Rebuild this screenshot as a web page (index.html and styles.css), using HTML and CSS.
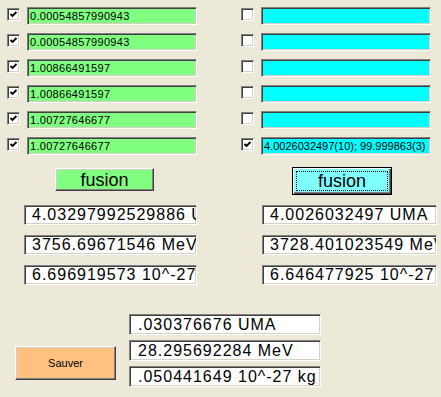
FILE: index.html
```html
<!DOCTYPE html>
<html>
<head>
<meta charset="utf-8">
<link rel="stylesheet" href="styles.css">
</head>
<body>
<div class="page">
  <div class="inputs">
    <div class="row">
      <span class="cb checked"><svg viewBox="0 0 9 9"><path d="M1.5 4 L3.5 6 L7.5 2"/></svg></span>
      <div class="field green">0.00054857990943</div>
      <span class="cb"></span>
      <div class="field cyan"></div>
    </div>
    <div class="row">
      <span class="cb checked"><svg viewBox="0 0 9 9"><path d="M1.5 4 L3.5 6 L7.5 2"/></svg></span>
      <div class="field green">0.00054857990943</div>
      <span class="cb"></span>
      <div class="field cyan"></div>
    </div>
    <div class="row">
      <span class="cb checked"><svg viewBox="0 0 9 9"><path d="M1.5 4 L3.5 6 L7.5 2"/></svg></span>
      <div class="field green">1.00866491597</div>
      <span class="cb"></span>
      <div class="field cyan"></div>
    </div>
    <div class="row">
      <span class="cb checked"><svg viewBox="0 0 9 9"><path d="M1.5 4 L3.5 6 L7.5 2"/></svg></span>
      <div class="field green">1.00866491597</div>
      <span class="cb"></span>
      <div class="field cyan"></div>
    </div>
    <div class="row">
      <span class="cb checked"><svg viewBox="0 0 9 9"><path d="M1.5 4 L3.5 6 L7.5 2"/></svg></span>
      <div class="field green">1.00727646677</div>
      <span class="cb"></span>
      <div class="field cyan"></div>
    </div>
    <div class="row">
      <span class="cb checked"><svg viewBox="0 0 9 9"><path d="M1.5 4 L3.5 6 L7.5 2"/></svg></span>
      <div class="field green">1.00727646677</div>
      <span class="cb checked"><svg viewBox="0 0 9 9"><path d="M1.5 4 L3.5 6 L7.5 2"/></svg></span>
      <div class="field cyan">4.0026032497(10); 99.999863(3)</div>
    </div>
  </div>

  <div class="results">
    <div class="col col-left">
      <button class="btn btn-green">fusion</button>
      <div class="out">4.03297992529886 UMA</div>
      <div class="out">3756.69671546 MeV</div>
      <div class="out">6.696919573 10^-27 kg</div>
    </div>
    <div class="col col-right">
      <button class="btn btn-cyan focused"><span class="focus">fusion</span></button>
      <div class="out wide">4.0026032497 UMA</div>
      <div class="out wide">3728.401023549 MeV</div>
      <div class="out wide">6.646477925 10^-27 kg</div>
    </div>
  </div>

  <div class="bottom">
    <button class="btn btn-orange">Sauver</button>
    <div class="diff">
      <div class="out big">.030376676 UMA</div>
      <div class="out big">28.295692284 MeV</div>
      <div class="out big">.050441649 10^-27 kg</div>
    </div>
  </div>
</div>
</body>
</html>
```

FILE: styles.css
```css
html, body {
  margin: 0;
  padding: 0;
  background: #ece9d8;
  width: 441px;
  height: 397px;
  overflow: hidden;
}

.page {
  font-family: "Liberation Sans", Arial, sans-serif;
  color: #000;
}

.inputs {
  padding: 7px 0 0 7px;
  display: flex;
  flex-direction: column;
  gap: 8px;
}

.row {
  display: flex;
  align-items: flex-start;
  height: 18px;
}

.cb {
  box-sizing: border-box;
  width: 13px;
  height: 13px;
  margin-top: 1px;
  background: #fff;
  border-style: solid;
  border-width: 1px;
  border-color: #808080 #fff #fff #808080;
  box-shadow: inset 1px 1px 0 #404040, inset -1px -1px 0 #d4d0c8;
  display: flex;
  align-items: center;
  justify-content: center;
}

.cb svg {
  width: 9px;
  height: 9px;
}

.cb svg path {
  fill: none;
  stroke: #000;
  stroke-width: 1.8;
}

.row .cb:first-child {
  margin-right: 7px;
}

.row .cb:nth-child(3) {
  margin-left: 44px;
  margin-right: 7px;
}

.field {
  box-sizing: border-box;
  width: 170px;
  height: 18px;
  border-style: solid;
  border-width: 1px;
  border-color: #808080 #fff #fff #808080;
  box-shadow: inset 1px 1px 0 #404040, inset -1px -1px 0 #d4d0c8;
  font-size: 11px;
  letter-spacing: 0.3px;
  line-height: 16px;
  padding-left: 2px;
  white-space: nowrap;
  overflow: hidden;
}

.green { background: #80ff80; }
.cyan { background: #00ffff; letter-spacing: 0; }

.results {
  display: flex;
  margin-top: 13px;
}

.col {
  display: flex;
  flex-direction: column;
  gap: 10px;
}

.col-left {
  margin-left: 24px;
  width: 173px;
}

.col-right {
  margin-left: 65px;
  width: 175px;
}

.btn {
  box-sizing: border-box;
  font-family: "Liberation Sans", Arial, sans-serif;
  padding: 0;
  margin: 0;
  border-style: solid;
  border-width: 1px;
  border-color: #fff #404040 #404040 #fff;
  box-shadow: inset -1px -1px 0 #808080, inset 1px 1px 0 #d4d0c8;
  color: #000;
}

.btn-green {
  background: #80ff80;
  width: 99px;
  height: 23px;
  margin-left: 31px;
  margin-bottom: 4px;
  font-size: 18px;
  line-height: 20px;
}

.btn-cyan {
  background: #80ffff;
  width: 100px;
  height: 28px;
  margin-left: 30px;
  margin-top: -1px;
  font-size: 18px;
  border: 1px solid #000;
  box-shadow: inset 1px 1px 0 #fff, inset -1px -1px 0 #404040, inset -2px -2px 0 #808080;
  padding: 3px;
  display: flex;
}

.btn-cyan .focus {
  flex: 1;
  border: 1px dotted #000;
  line-height: 18px;
  display: block;
}

.out {
  box-sizing: border-box;
  height: 20px;
  width: 173px;
  background: #fff;
  border-style: solid;
  border-width: 1px;
  border-color: #808080 #fff #fff #808080;
  box-shadow: inset 1px 1px 0 #404040, inset -1px -1px 0 #d4d0c8;
  font-size: 16px;
  letter-spacing: 1px;
  line-height: 18px;
  padding-left: 7px;
  white-space: nowrap;
  overflow: hidden;
}

.out.wide {
  width: 175px;
}

.bottom {
  display: flex;
  align-items: flex-end;
  margin-top: 29px;
}

.btn-orange {
  background: #ffc080;
  width: 101px;
  height: 34px;
  margin-left: 15px;
  margin-bottom: 7px;
  font-size: 11px;
}

.diff {
  display: flex;
  flex-direction: column;
  gap: 5px;
  margin-left: 13px;
}

.out.big {
  width: 192px;
  height: 21px;
  line-height: 19px;
  padding-left: 8px;
}
```
